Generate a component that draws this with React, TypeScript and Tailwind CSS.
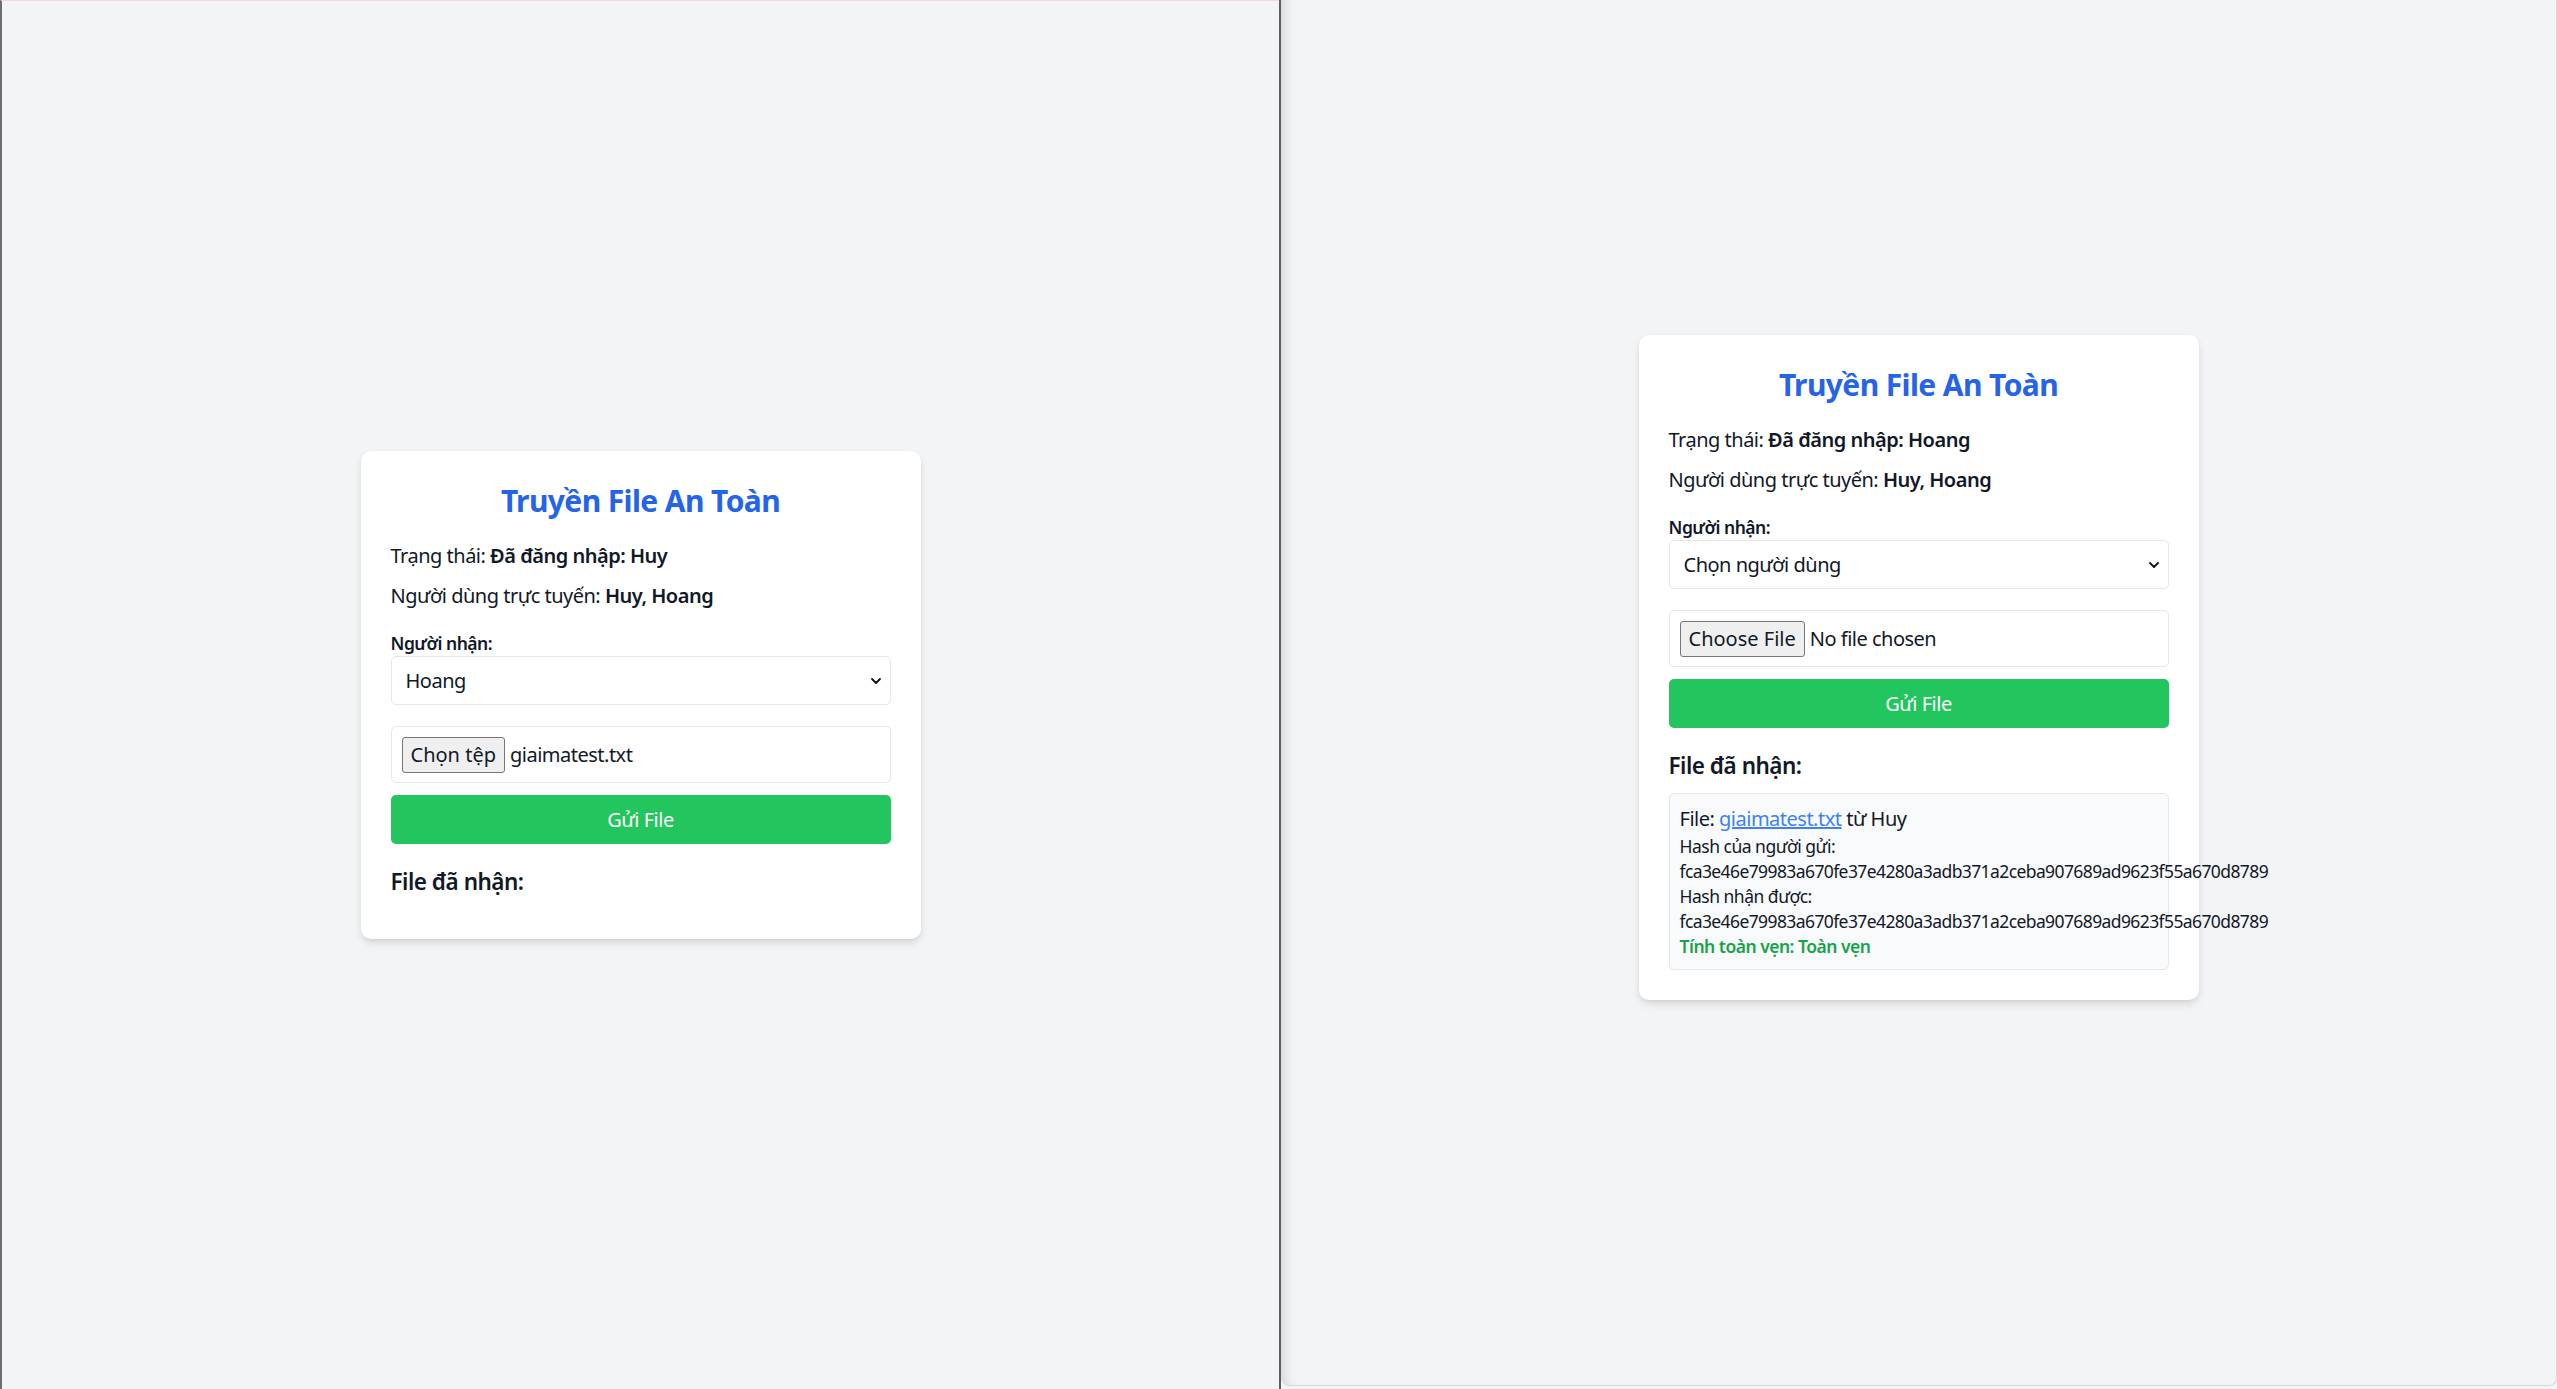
const hash = 'fca3e46e79983a670fe37e4280a3adb371a2ceba907689ad9623f55a670d8789';

function Chevron() {
  return (
    <svg className="pointer-events-none absolute right-[9px] top-1/2 h-[12px] w-[12px] -translate-y-1/2" viewBox="0 0 12 12" fill="none">
      <path d="M2 4l4 4 4-4" stroke="#111" strokeWidth="1.8" strokeLinecap="round" strokeLinejoin="round" />
    </svg>
  );
}

type CardProps = {
  user: string;
  recipient: string;
  fileButton: string;
  fileName: string;
  received: boolean;
};

function TransferCard({ user, recipient, fileButton, fileName, received }: CardProps) {
  return (
    <div className="w-[560px] rounded-[10px] bg-white p-[30px] tracking-[-0.5px] text-[#111827] shadow-[0_5px_10px_-1px_rgba(0,0,0,0.1),0_2px_6px_-2px_rgba(0,0,0,0.1)]">
      <h1 className="mb-[20px] text-center text-[30px] font-bold leading-[40px] tracking-[-0.6px] text-[#2563eb]">Truyền File An Toàn</h1>
      <p className="mb-[10px] text-[20px] leading-[30px]">
        Trạng thái: <span className="font-semibold">Đã đăng nhập: {user}</span>
      </p>
      <p className="mb-[20px] text-[20px] leading-[30px]">
        Người dùng trực tuyến: <span className="font-semibold">Huy, Hoang</span>
      </p>

      <label className="block text-[17.5px] font-semibold leading-[25px]">Người nhận:</label>
      <div className="relative mb-[21px]">
        <div className="flex h-[49px] w-full items-center rounded-[5px] border border-[#e5e7eb] px-[14px] text-[20px]">{recipient}</div>
        <Chevron />
      </div>

      <div className="mb-[12px] flex h-[57px] items-center gap-[5px] rounded-[5px] border border-[#e5e7eb] px-[10px] text-[20px]">
        <span className="flex h-[36px] items-center rounded-[3px] border border-[#767676] bg-[#efefef] px-[8px] leading-none tracking-normal">{fileButton}</span>
        <span>{fileName}</span>
      </div>

      <button className="flex h-[49px] w-full items-center justify-center rounded-[5px] bg-[#22c55e] text-[20px] text-white">Gửi File</button>

      <h2 className="mb-[10px] mt-[20px] text-[22.5px] font-semibold leading-[35px]">File đã nhận:</h2>
      {received && (
        <ul>
          <li className="rounded-[5px] border border-[#e5e7eb] bg-[#f9fafb] p-[10px]">
            <p className="text-[20px] leading-[30px]">
              File: <a className="text-[#3b82f6] underline">giaimatest.txt</a> từ Huy
            </p>
            <p className="text-[17.5px] leading-[25px]">Hash của người gửi:</p>
            <p className="whitespace-nowrap text-[17.5px] leading-[25px] tracking-[-0.6px]">{hash}</p>
            <p className="text-[17.5px] leading-[25px]">Hash nhận được:</p>
            <p className="whitespace-nowrap text-[17.5px] leading-[25px] tracking-[-0.6px]">{hash}</p>
            <p className="text-[17.5px] font-semibold leading-[25px] text-[#16a34a]">Tính toàn vẹn: Toàn vẹn</p>
          </li>
        </ul>
      )}
    </div>
  );
}

export default function App() {
  return (
    <div className="flex h-[1389px] w-[2557px] overflow-hidden bg-[#f3f4f6] font-['Noto_Sans',sans-serif]">
      <div className="flex h-full w-[1279px] items-center justify-center border-l-2 border-t border-l-[#6e6e6e] border-t-[#f8d7dc]">
        <TransferCard user="Huy" recipient="Hoang" fileButton="Chọn tệp" fileName="giaimatest.txt" received={false} />
      </div>
      <div className="w-[2px] bg-[#5f5f5f]" />
      <div className="flex h-[1386px] flex-1 items-center justify-center rounded-b-[8px] border-b border-r border-[#d9d9d9] pb-[50px] shadow-[inset_14px_0_12px_-10px_rgba(0,0,0,0.12)]">
        <TransferCard user="Hoang" recipient="Chọn người dùng" fileButton="Choose File" fileName="No file chosen" received={true} />
      </div>
    </div>
  );
}
